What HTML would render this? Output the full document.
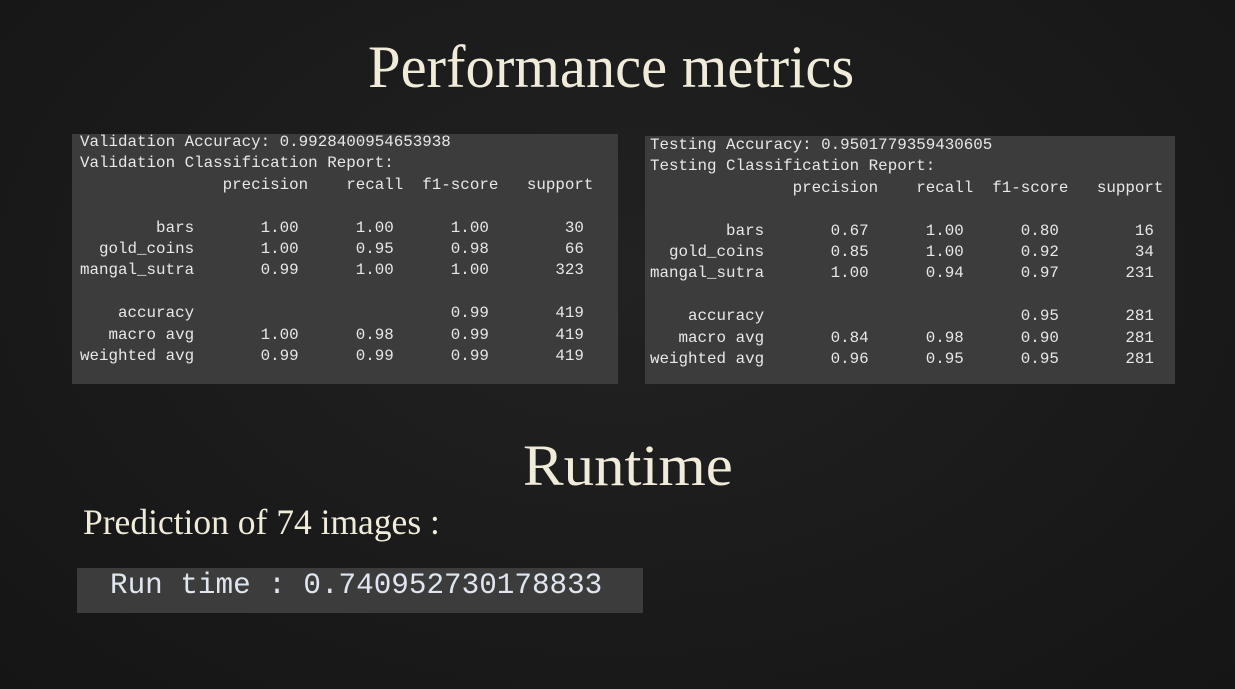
<!DOCTYPE html>
<html><head><meta charset="utf-8"><style>
html,body{margin:0;padding:0;}
body{width:1235px;height:689px;overflow:hidden;position:relative;background:#1b1b1b;
background-image:radial-gradient(ellipse at 50% 40%,#222 0%,#1a1a1a 60%,#151515 100%);}
.t{position:absolute;font-family:"Liberation Serif",serif;color:#f1ebd9;white-space:nowrap;line-height:1;}
.box{position:absolute;background:#3c3c3c;}
pre{margin:0;position:absolute;font-family:"Liberation Mono",monospace;font-size:15.85px;line-height:21.4px;color:#e8e8e8;}
</style></head><body>
<div class="t" style="left:368px;top:37px;font-size:60px;transform-origin:0 0;transform:scaleX(0.976);">Performance metrics</div>
<div class="box" style="left:72px;top:134px;width:546px;height:250px;"></div>
<pre style="left:80px;top:132px;">Validation Accuracy: 0.9928400954653938
Validation Classification Report:
               precision    recall  f1-score   support

        bars       1.00      1.00      1.00        30
  gold_coins       1.00      0.95      0.98        66
mangal_sutra       0.99      1.00      1.00       323

    accuracy                           0.99       419
   macro avg       1.00      0.98      0.99       419
weighted avg       0.99      0.99      0.99       419</pre>
<div class="box" style="left:645px;top:136px;width:530px;height:248px;"></div>
<pre style="left:650px;top:135px;">Testing Accuracy: 0.9501779359430605
Testing Classification Report:
               precision    recall  f1-score   support

        bars       0.67      1.00      0.80        16
  gold_coins       0.85      1.00      0.92        34
mangal_sutra       1.00      0.94      0.97       231

    accuracy                           0.95       281
   macro avg       0.84      0.98      0.90       281
weighted avg       0.96      0.95      0.95       281</pre>
<div class="t" style="left:523px;top:437px;font-size:58px;transform-origin:0 0;transform:scaleX(1.05);">Runtime</div>
<div class="t" style="left:83px;top:504px;font-size:36px;transform-origin:0 0;transform:scaleX(0.986);">Prediction of 74 images :</div>
<div class="box" style="left:77px;top:568px;width:566px;height:45px;"></div>
<pre style="left:110px;top:568px;font-size:29.3px;line-height:36px;color:#dfe6f0;">Run time : 0.740952730178833</pre>
</body></html>
